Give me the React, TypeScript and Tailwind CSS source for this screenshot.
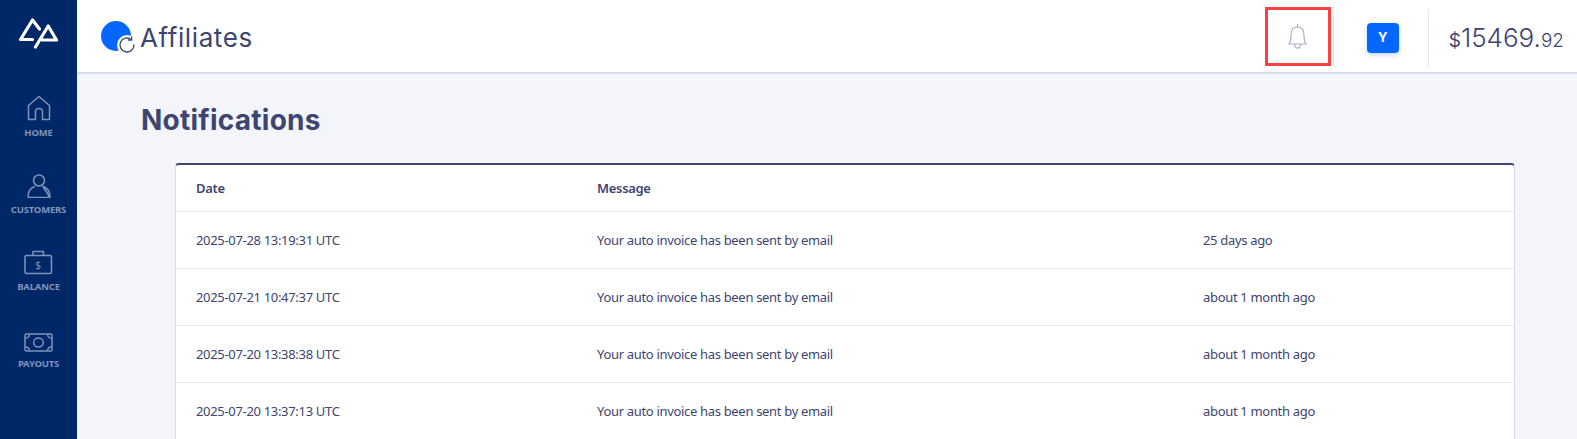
import React from "react";

const rows = [
  ["2025-07-28 13:19:31 UTC", "25 days ago"],
  ["2025-07-21 10:47:37 UTC", "about 1 month ago"],
  ["2025-07-20 13:38:38 UTC", "about 1 month ago"],
  ["2025-07-20 13:37:13 UTC", "about 1 month ago"],
];

function NavItem({ label, icon }: { label: string; icon: React.ReactNode }) {
  return (
    <div className="flex h-[77px] flex-col items-center text-[#7f93b8]">
      <div className="flex h-[38px] w-full items-end justify-center">{icon}</div>
      <div className="mt-[5px] text-[9.5px] leading-[14px] font-bold tracking-[-0.2px]">{label}</div>
    </div>
  );
}

export default function App() {
  return (
    <div className="flex h-[439px] w-[1577px] overflow-hidden bg-[#f3f5fa] font-['Noto_Sans','Open_Sans',sans-serif] text-[#3d4570]">
      <aside className="flex h-full w-[77px] shrink-0 flex-col bg-[#002868]">
        <div className="flex h-[72px] items-start justify-center pt-[17px]">
          <svg width="42" height="32" viewBox="0 0 42 32" fill="none" stroke="#fff" strokeWidth="3.2" strokeLinecap="round" strokeLinejoin="round">
            <path d="M21.5 12 L14.5 3 L2.5 22.5 L14.5 22.5" />
            <path d="M17.5 30 L30.2 9 L38.5 23 L24.5 23" />
          </svg>
        </div>
        <nav className="flex flex-col pt-[11px]">
          <NavItem label="HOME" icon={
            <svg width="24" height="26" viewBox="0 0 24 26" fill="none" stroke="currentColor" strokeWidth="1.5" strokeLinejoin="round">
              <path d="M1.5 10.5 L12 1.5 L22.5 10.5 V24.5 H15.5 V16.5 Q15.5 13.5 12 13.5 Q8.5 13.5 8.5 16.5 V24.5 H1.5 Z" />
            </svg>
          } />
          <NavItem label="CUSTOMERS" icon={
            <svg width="24" height="24" viewBox="0 0 24 24" fill="none" stroke="currentColor" strokeWidth="1.5" strokeLinejoin="round">
              <circle cx="12" cy="6.5" r="5.5" />
              <path d="M1 23.5 Q1 14.5 8 12.5 M16 12.5 Q23 14.5 23 23.5 Z M1 23.5 H23" />
            </svg>
          } />
          <NavItem label="BALANCE" icon={
            <svg width="29" height="25" viewBox="0 0 29 25" fill="none" stroke="currentColor" strokeWidth="1.5" strokeLinejoin="round">
              <rect x="1" y="5.5" width="26.5" height="18" rx="1.5" />
              <path d="M9 5.5 V1.5 H19.5 V5.5" />
              <text x="14.2" y="18.5" fontSize="10" fontFamily="Noto Sans" textAnchor="middle" fill="currentColor" stroke="none">$</text>
            </svg>
          } />
          <NavItem label="PAYOUTS" icon={
            <svg width="29" height="19" viewBox="0 0 29 19" fill="none" stroke="currentColor" strokeWidth="1.5" strokeLinejoin="round">
              <rect x="1" y="1" width="27" height="17" rx="1.5" />
              <ellipse cx="14.5" cy="9.5" rx="4.8" ry="4.5" />
              <path d="M1.5 5 Q5 5 5.5 1.5 M23.5 1.5 Q24 5 27.5 5 M1.5 14 Q5 14 5.5 17.5 M23.5 17.5 Q24 14 27.5 14" />
            </svg>
          } />
        </nav>
      </aside>

      <div className="flex min-w-0 flex-1 flex-col">
        <header className="flex h-[74px] shrink-0 items-center border-b-2 border-[#d8dbec] bg-white pl-[24px]">
          <div className="relative h-[30px] w-[30px] self-center">
            <div className="h-[30px] w-[30px] rounded-full bg-[#0767fd]" />
            <div className="absolute top-[14px] left-[16px] flex h-[20px] w-[20px] items-center justify-center rounded-full bg-white">
              <svg width="18" height="18" viewBox="0 0 18 18" fill="none" stroke="#3d4570" strokeWidth="1.3" strokeLinecap="round">
                <path d="M16 9 A7 7 0 1 1 13.2 3.4" />
                <path d="M13.6 0.8 L13.6 4 L10.4 4" />
              </svg>
            </div>
          </div>
          <h1 className="mt-[3px] ml-[9px] font-['Inter',sans-serif] text-[26px] leading-none font-normal tracking-[0.6px] text-[#3d4570]">Affiliates</h1>
          <div className="flex-1" />
          <div className="flex h-[59px] w-[66px] items-center justify-center border-[3px] border-[#f94144]">
            <svg width="19" height="27" viewBox="0 0 19 27" fill="none" stroke="#a6aec7" strokeWidth="1.2" strokeLinejoin="round">
              <path d="M9.5 1 V4" />
              <path d="M1 21 Q3 18 3 12 Q3 4 9.5 4 Q16 4 16 12 Q16 18 18 21 Z" />
              <path d="M6.5 21 C6.5 26.5 12.5 26.5 12.5 21" />
            </svg>
          </div>
          <div className="mt-[4px] ml-[2px] h-[58px] w-px bg-[#e3e5ec]" />
          <div className="mt-[4px] ml-[33px] flex h-[30px] w-[32px] items-center justify-center rounded-[4px] bg-[#0767fd] font-['Inter',sans-serif] text-[13px] font-bold text-white shadow-[0_2px_5px_rgba(7,103,253,0.25)]">Y</div>
          <div className="mt-[4px] ml-[29px] h-[58px] w-px bg-[#e3e5ec]" />
          <div className="mt-[3px] mr-[13px] ml-[20px] flex items-baseline font-['Inter',sans-serif] text-[#3d4570]">
            <span className="text-[19px]">$</span>
            <span className="text-[26px] font-light">15469.</span>
            <span className="text-[19px] font-light">92</span>
          </div>
        </header>

        <main className="flex-1 pl-[64px]">
          <h2 className="mt-[27px] font-['Inter',sans-serif] text-[28px] leading-[38px] font-bold tracking-[0.25px] text-[#3d4570]">Notifications</h2>
          <div className="mt-[24px] mr-[62px] ml-[34px] rounded-t-[4px] border-x border-t-2 border-x-[#d8dbec] border-t-[#3d4570] bg-white text-[13px] tracking-[-0.32px]">
            <div className="flex h-[47px] items-center border-b border-[#e8e9ee] pt-[2px] pl-[20px] font-semibold">
              <div className="w-[401px]">Date</div>
              <div>Message</div>
            </div>
            {rows.map(([date, ago]) => (
              <div key={date} className="flex h-[57px] items-center border-b border-[#e8e9ee] pt-[2px] pl-[20px]">
                <div className="w-[401px]">{date}</div>
                <div className="w-[606px]">Your auto invoice has been sent by email</div>
                <div>{ago}</div>
              </div>
            ))}
          </div>
        </main>
      </div>
    </div>
  );
}
